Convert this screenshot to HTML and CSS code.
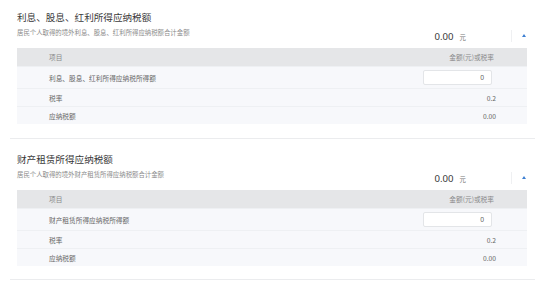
FILE: index.html
```html
<!DOCTYPE html>
<html lang="zh-CN">
<head>
<meta charset="utf-8">
<link rel="stylesheet" href="styles.css">
</head>
<body>
<div class="page">
  <section class="section">
    <div class="head">
      <div class="head-left">
        <div class="title">利息、股息、红利所得应纳税额</div>
        <div class="subtitle">居民个人取得的境外利息、股息、红利所得应纳税额合计金额</div>
      </div>
      <div class="head-right">
        <span class="amount">0.00</span><span class="unit">元</span>
        <span class="vdiv"></span>
        <span class="caret"></span>
      </div>
    </div>
    <div class="table">
      <div class="row row-head"><span class="label">项目</span><span class="value">金额(元)或税率</span></div>
      <div class="row row-input"><span class="label">利息、股息、红利所得应纳税所得额</span><span class="input">0</span></div>
      <div class="row"><span class="label">税率</span><span class="value">0.2</span></div>
      <div class="row"><span class="label">应纳税额</span><span class="value">0.00</span></div>
    </div>
  </section>
  <section class="section">
    <div class="head">
      <div class="head-left">
        <div class="title">财产租赁所得应纳税额</div>
        <div class="subtitle">居民个人取得的境外财产租赁所得应纳税额合计金额</div>
      </div>
      <div class="head-right">
        <span class="amount">0.00</span><span class="unit">元</span>
        <span class="vdiv"></span>
        <span class="caret"></span>
      </div>
    </div>
    <div class="table">
      <div class="row row-head"><span class="label">项目</span><span class="value">金额(元)或税率</span></div>
      <div class="row row-input"><span class="label">财产租赁所得应纳税所得额</span><span class="input">0</span></div>
      <div class="row"><span class="label">税率</span><span class="value">0.2</span></div>
      <div class="row"><span class="label">应纳税额</span><span class="value">0.00</span></div>
    </div>
  </section>
</div>
</body>
</html>
```

FILE: styles.css
```css
html, body {
  margin: 0;
  padding: 0;
  background: #ffffff;
}
body {
  font-family: "Noto Sans", "Noto Sans CJK SC", sans-serif;
  color: #333;
}
.page {
  display: flex;
  flex-direction: column;
}
.section {
  margin: 0 18px 0 10px;
  padding: 13px 8px 13px 7px;
  border-bottom: 1px solid #ebecee;
}
.section:first-child {
  padding-top: 10px;
  padding-bottom: 14px;
}
.head {
  display: flex;
  justify-content: space-between;
  align-items: flex-end;
}
.head-left {
  display: flex;
  flex-direction: column;
  padding-bottom: 5px;
}
.title {
  font-family: "Noto Sans CJK SC", sans-serif;
  font-size: 9.6px;
  line-height: 15px;
  color: #3a3a3a;
}
.subtitle {
  font-family: "Noto Sans CJK SC", sans-serif;
  font-size: 6.4px;
  line-height: 10px;
  margin-top: 3px;
  color: #8a8a8a;
}
.head-right {
  display: flex;
  align-items: center;
  height: 14px;
}
.amount {
  font-size: 9.6px;
  color: #383838;
}
.unit {
  font-family: "Noto Sans CJK SC", sans-serif;
  font-size: 6.4px;
  color: #777;
  margin-left: 6px;
  margin-top: 2px;
}
.vdiv {
  width: 1px;
  height: 12px;
  background: #eff0f2;
  margin-left: 45px;
}
.caret {
  width: 0;
  height: 0;
  border-left: 2.5px solid transparent;
  border-right: 2.5px solid transparent;
  border-bottom: 3px solid #3d7fd2;
  margin-left: 10px;
  margin-right: 1px;
  margin-bottom: 1px;
}
.table {
  margin-top: 5px;
  display: flex;
  flex-direction: column;
  font-family: "Noto Sans CJK SC", sans-serif;
  font-size: 6.7px;
  color: #666;
}
.row {
  display: grid;
  grid-template-columns: 1fr auto;
  align-items: center;
  height: 18px;
  padding-left: 32px;
  padding-right: 31px;
  background: #f7f8fb;
  border-top: 1px solid #eef0f3;
  box-sizing: border-box;
}
.label {
  justify-self: start;
}
.value {
  justify-self: end;
}
.row-head {
  background: #e5e6e8;
  border-top: none;
  color: #888;
  padding-right: 33px;
}
.row-input {
  height: 22px;
  padding-right: 35px;
}
.input {
  width: 69px;
  height: 15px;
  box-sizing: border-box;
  background: #fff;
  border: 1px solid #e3e5e8;
  border-radius: 2px;
  text-align: right;
  padding-right: 7px;
  line-height: 13px;
  color: #666;
  font-family: "Noto Sans", sans-serif;
}
```
